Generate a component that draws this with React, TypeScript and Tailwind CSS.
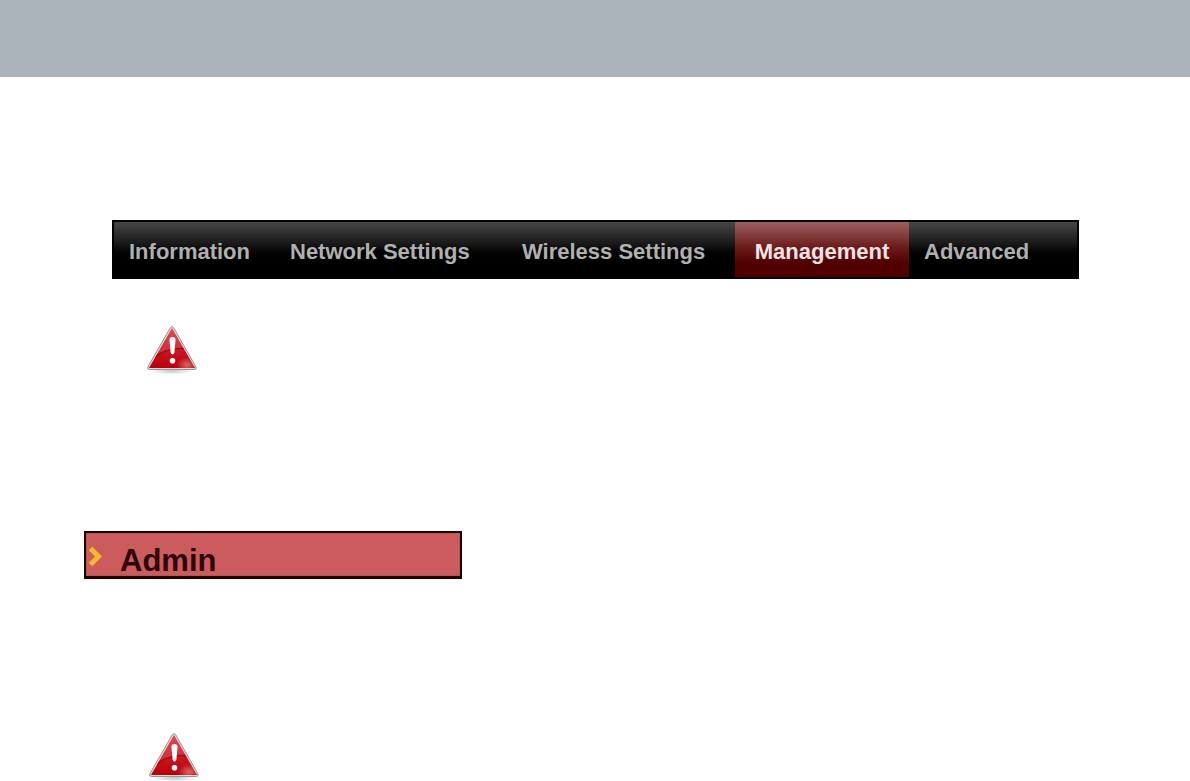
import clsx from "clsx";

const tabs = [
  { label: "Information" },
  { label: "Network Settings" },
  { label: "Wireless Settings" },
  { label: "Management", active: true },
  { label: "Advanced" },
];

export default function App() {
  return (
    <div className="font-['Liberation_Sans',Arial,sans-serif] bg-white">
      <header className="h-[77px] bg-[#abb3bb]" />
      <main className="flex flex-col items-start pt-[143px]">
        <div className="w-full pl-28 pr-[111px]">
          <TabBar />
        </div>
        <WarningIcon className="ml-[146px] mt-[46px]" />
        <AdminHeading />
        <WarningIcon className="ml-[148px] mt-[153px]" />
      </main>
    </div>
  );
}

function TabBar() {
  return (
    <nav className="grid grid-cols-[161fr_232fr_228fr_174fr_168fr] h-[59px] border-2 border-black bg-linear-to-b from-[#424242] from-5% via-[#181818] via-40% to-black to-70%">
      {tabs.map((tab) => (
        <a
          key={tab.label}
          href="#"
          className={clsx(
            "flex items-center pt-1 text-[22px] leading-6 font-bold whitespace-nowrap",
            tab.active
              ? "justify-center text-[#f4e4e4] bg-linear-to-b from-[#9a6060] via-[#6c1c1c] via-45% to-[#500000] to-75%"
              : "pl-[15px] text-[#b0b0b0]"
          )}
        >
          {tab.label}
        </a>
      ))}
    </nav>
  );
}

function AdminHeading() {
  return (
    <div className="ml-[84px] mt-[156px] w-[378px] h-12 border-2 border-b-3 border-[#210000] bg-[#cc5b5e]">
      <a
        href="#"
        className="flex items-center h-full border border-[#a95c58] text-[31px] leading-8 font-bold text-[#2c0508]"
      >
        <svg width="18" height="24" viewBox="0 0 18 24" aria-hidden="true">
          <path
            d="M3.5 5.5 L11.5 13.5 L3.5 21.5"
            fill="none"
            stroke="#f5b82e"
            strokeWidth="5"
          />
        </svg>
        <span className="pl-[15px] pt-3">Admin</span>
      </a>
    </div>
  );
}

function WarningIcon({ className }: { className: string }) {
  return (
    <svg
      className={className}
      width="52"
      height="50"
      viewBox="0 0 52 50"
      role="img"
      aria-label="Warning"
    >
      <defs>
        <linearGradient id="warning-red" x1="0" y1="0" x2="0" y2="1">
          <stop offset="0" stopColor="#e23f46" />
          <stop offset="0.45" stopColor="#cd1c26" />
          <stop offset="1" stopColor="#b8000a" />
        </linearGradient>
        <linearGradient id="warning-gloss" x1="0" y1="0" x2="0" y2="1">
          <stop offset="0" stopColor="#ffffff" stopOpacity="0.04" />
          <stop offset="1" stopColor="#ffffff" stopOpacity="0.16" />
        </linearGradient>
        <radialGradient id="warning-shadow">
          <stop offset="0" stopColor="#888888" stopOpacity="0.5" />
          <stop offset="1" stopColor="#888888" stopOpacity="0" />
        </radialGradient>
        <radialGradient id="warning-glow">
          <stop offset="0" stopColor="#e58a80" stopOpacity="0.75" />
          <stop offset="1" stopColor="#e58a80" stopOpacity="0" />
        </radialGradient>
        <clipPath id="warning-clip">
          <path d="M26 3 L49 43 H3 Z" />
        </clipPath>
      </defs>
      <ellipse cx="26" cy="46" rx="22" ry="3.5" fill="url(#warning-shadow)" />
      <path
        d="M24.3 2.7 Q26 0.2 27.7 2.7 L50 42 Q50.8 44.5 48.3 44.5 H3.7 Q0.8 44.5 1.8 42 Z"
        fill="#e2d8d5"
        stroke="#969696"
        strokeWidth="1"
      />
      <path d="M26 3 L49 43 H3 Z" fill="url(#warning-red)" />
      <g clipPath="url(#warning-clip)">
        <path d="M0 0 H52 V25 Q28 17 0 35 Z" fill="url(#warning-gloss)" />
        <path
          d="M9 32 Q24 20 45 25"
          fill="none"
          stroke="#8e0008"
          strokeWidth="1.5"
          opacity="0.6"
        />
        <ellipse cx="41" cy="40" rx="11" ry="8" fill="url(#warning-glow)" />
      </g>
      <path
        d="M26.5 12 C29 12 29.7 13.5 29.5 15.5 L28.4 27.5 Q28 29.5 26.5 29.5 Q25 29.5 24.6 27.5 L23.5 15.5 C23.3 13.5 24 12 26.5 12 Z"
        fill="#ffffff"
      />
      <circle cx="26.5" cy="35.7" r="2.8" fill="#ffffff" />
    </svg>
  );
}
